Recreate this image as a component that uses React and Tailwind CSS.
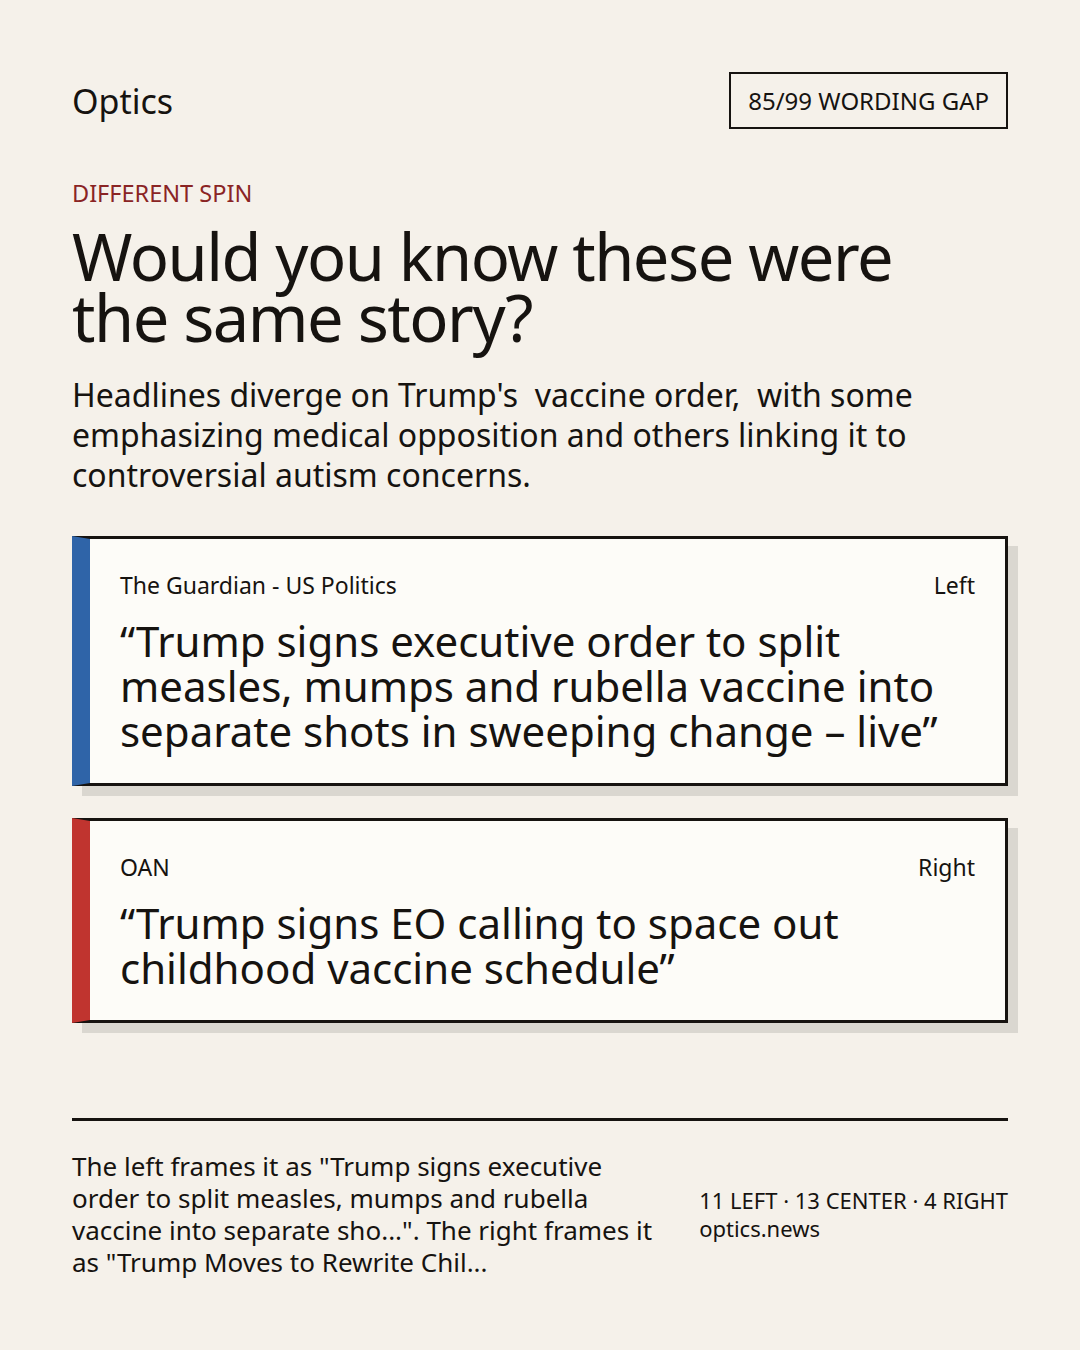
export default function App() {
  const cards = [
    {
      source: 'The Guardian - US Politics',
      lean: 'Left',
      bar: 'border-l-[#2f64a8]',
      quote: '“Trump signs executive order to split measles, mumps and rubella vaccine into separate shots in sweeping change – live”',
    },
    {
      source: 'OAN',
      lean: 'Right',
      bar: 'border-l-[#c0342f]',
      quote: '“Trump signs EO calling to space out childhood vaccine schedule”',
    },
  ]

  return (
    <div className="w-[1080px] h-[1350px] bg-[#f5f1ea] text-[#161310] px-[72px] pt-[72px] font-['Noto_Sans',sans-serif]">
      {/* header */}
      <div className="flex items-center justify-between">
        <div className="text-[34px] leading-none">Optics</div>
        <div className="h-[57px] flex items-center border-2 border-[#161310] px-[17px] text-[24px] leading-none">
          85/99 WORDING GAP
        </div>
      </div>

      <div className="mt-[49px] text-[23.5px] leading-[30px] text-[#8a2424]">DIFFERENT SPIN</div>

      <h1 className="mt-[18px] pr-[40px] text-[65px] leading-[61px] tracking-[-1.5px]">
        Would you know these were the same story?
      </h1>

      <p className="mt-[27px] text-[32px] leading-[40px]">
        Headlines diverge on Trump's&nbsp; vaccine order,&nbsp; with some emphasizing medical opposition and others linking it to controversial autism concerns.
      </p>

      <div className="mt-[41px] flex flex-col gap-[32px]">
        {cards.map((c) => (
          <div
            key={c.source}
            className={`bg-[#fdfcf8] border-[3px] border-l-[18px] border-[#161310] ${c.bar} shadow-[10px_10px_0_#dad7d0] px-[30px] pt-[30px] pb-[30px]`}
          >
            <div className="flex justify-between text-[23px] leading-[32px]">
              <span>{c.source}</span>
              <span>{c.lean}</span>
            </div>
            <div className="mt-[17px] text-[42px] leading-[45px]">{c.quote}</div>
          </div>
        ))}
      </div>

      <div className="mt-[95px] border-t-[3px] border-[#161310]" />

      <div className="mt-[29px] flex items-center gap-[40px]">
        <p className="flex-1 text-[26px] leading-[32px]">
          The left frames it as "Trump signs executive order to split measles, mumps and rubella vaccine into separate sho...". The right frames it as "Trump Moves to Rewrite Chil...
        </p>
        <div className="text-[22px] leading-[28px]">
          <div>11 LEFT · 13 CENTER · 4 RIGHT</div>
          <div>optics.news</div>
        </div>
      </div>
    </div>
  )
}
